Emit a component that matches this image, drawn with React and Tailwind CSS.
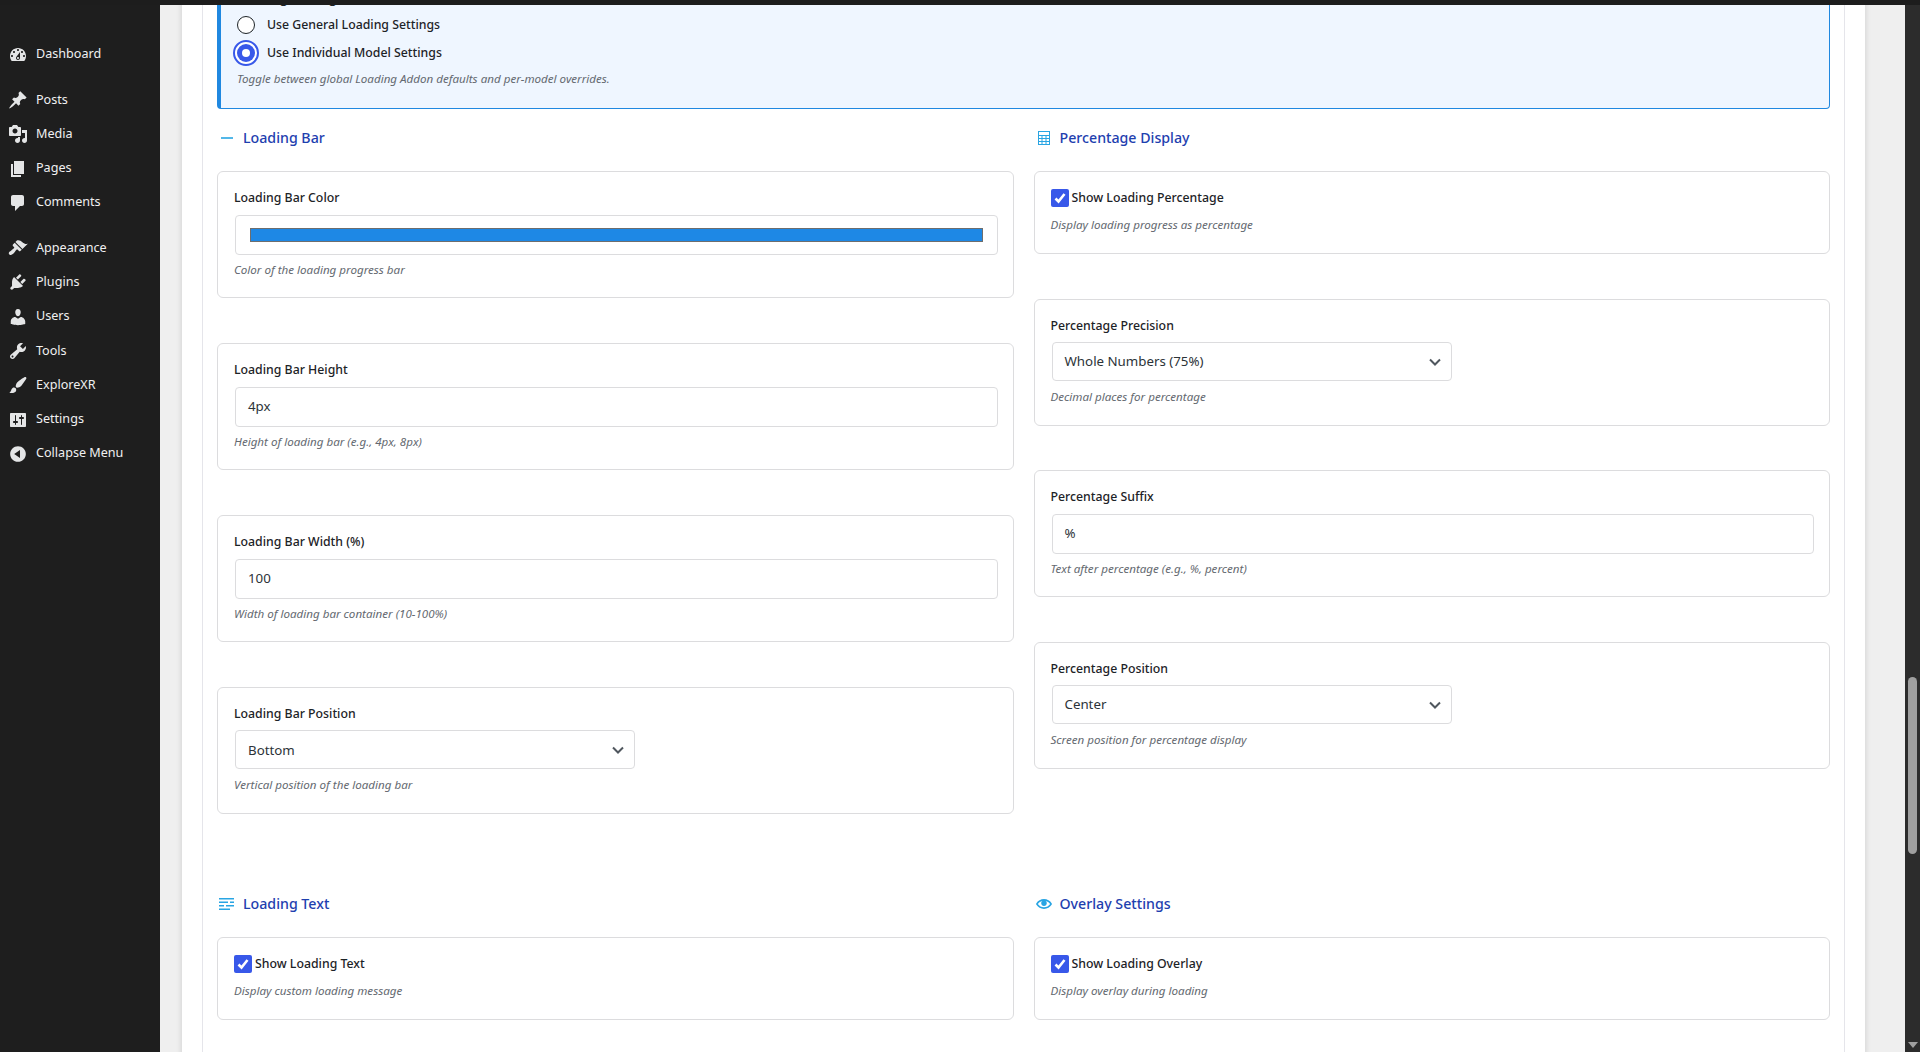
import React from 'react';

const FONT = "font-['Noto_Sans',sans-serif]";

const menu = [
    { label: 'Dashboard', d: 'M3.76 16h12.48c1.1-1.37 1.76-3.11 1.76-5 0-4.42-3.58-8-8-8s-8 3.58-8 8c0 1.89.66 3.63 1.76 5zM10 4c.55 0 1 .45 1 1s-.45 1-1 1-1-.45-1-1 .45-1 1-1zM6 6c.55 0 1 .45 1 1s-.45 1-1 1-1-.45-1-1 .45-1 1-1zm8 0c.55 0 1 .45 1 1s-.45 1-1 1-1-.45-1-1 .45-1 1-1zm-5.37 5.55L12 7v6c0 1.1-.9 2-2 2s-2-.9-2-2c0-.57.24-1.08.63-1.45zM4 10c.55 0 1 .45 1 1s-.45 1-1 1-1-.45-1-1 .45-1 1-1zm12 0c.55 0 1 .45 1 1s-.45 1-1 1-1-.45-1-1 .45-1 1-1zm-5 3c0-.55-.45-1-1-1s-1 .45-1 1 .45 1 1 1 1-.45 1-1z', gap: true },
    { label: 'Posts', d: 'M10.44 3.02l1.82-1.82 6.36 6.35-1.83 1.82c-1.05-.68-2.48-.57-3.41.36l-.75.75c-.92.93-1.04 2.35-.35 3.41l-1.83 1.82-2.41-2.41-2.8 2.79c-.42.42-3.38 2.71-3.8 2.29s1.86-3.39 2.28-3.81l2.79-2.79L4.1 9.36l1.83-1.82c1.05.69 2.48.57 3.4-.36l.75-.75c.93-.92 1.05-2.35.36-3.41z' },
    { label: 'Media', d: 'M13 11V4c0-.55-.45-1-1-1h-1.67L9 1H5L3.67 3H2c-.55 0-1 .45-1 1v7c0 .55.45 1 1 1h10c.55 0 1-.45 1-1zM7 4.5c1.38 0 2.5 1.12 2.5 2.5S8.38 9.5 7 9.5 4.5 8.38 4.5 7 5.62 4.5 7 4.5zM14 6h5v10.5c0 1.38-1.12 2.5-2.5 2.5S14 17.88 14 16.5s1.12-2.5 2.5-2.5c.17 0 .34.02.5.05V9h-3V6zm-4 8.05V13h2v3.5c0 1.38-1.12 2.5-2.5 2.5S7 17.88 7 16.5 8.12 14 9.5 14c.17 0 .34.02.5.05z' },
    { label: 'Pages', d: 'M6 15V2h10v13H6zm-1 1h8v2H3V5h2v11z' },
    { label: 'Comments', d: 'M5 2h9c1.1 0 2 .9 2 2v7c0 1.1-.9 2-2 2h-2l-5 5v-5H5c-1.1 0-2-.9-2-2V4c0-1.1.9-2 2-2z', gap: true },
    { label: 'Appearance', d: 'M14.48 11.06L7.41 3.99l1.5-1.5c.5-.56 2.3-.47 3.51.32 1.21.8 1.43 1.28 2.91 2.1 1.18.64 2.45 1.26 4.45.85zm-.71.71L6.7 4.7 4.93 6.47c-.39.39-.39 1.02 0 1.41l1.06 1.06c.39.39.39 1.03 0 1.42-.6.6-1.43 1.11-2.21 1.69-.35.26-.7.53-1.01.84C1.43 13.23 0 15 1.41 16.41s3.18-.02 4.52-1.36c.31-.31.58-.66.84-1.01.58-.78 1.09-1.61 1.69-2.21.39-.39 1.02-.39 1.41 0l1.06 1.06c.39.39 1.02.39 1.41 0z' },
    { label: 'Plugins', d: 'M13.11 4.36L9.87 7.6 8 5.73l3.24-3.24c.35-.34 1.05-.2 1.56.32.52.51.66 1.21.31 1.55zm-8 1.77l.91-1.12 9.01 9.01-1.19.84c-.71.71-2.63 1.16-3.82 1.16H6.14L4.9 17.26c-.59.59-1.54.59-2.12 0-.59-.58-.59-1.53 0-2.12l1.24-1.24v-3.88c0-1.13.4-3.19 1.09-3.89zm7.26 3.97l3.24-3.24c.34-.35 1.04-.21 1.55.31.52.51.66 1.21.31 1.55l-3.24 3.25z' },
    { label: 'Users', d: 'M10 9.25c-2.27 0-2.73-3.44-2.73-3.44C7 4.02 7.82 2 9.97 2c2.16 0 2.98 2.02 2.71 3.81 0 0-.41 3.44-2.68 3.44zm0 2.57L12.72 10c2.39 0 4.52 2.33 4.52 4.53v2.49s-3.65 1.13-7.24 1.13c-3.65 0-7.24-1.13-7.24-1.13v-2.49c0-2.25 1.94-4.48 4.47-4.48z' },
    { label: 'Tools', d: 'M16.68 9.77c-1.34 1.34-3.3 1.67-4.95.99l-5.41 6.52c-.99.99-2.59.99-3.58 0s-.99-2.59 0-3.57l6.52-5.42c-.68-1.65-.35-3.61.99-4.95 1.28-1.28 3.12-1.62 4.72-1.06l-2.89 2.89 2.82 2.82 2.86-2.87c.53 1.58.18 3.39-1.08 4.65zM3.81 16.21c.4.39 1.04.39 1.43 0 .4-.4.4-1.04 0-1.43-.39-.4-1.03-.4-1.43 0-.39.39-.39 1.03 0 1.43z' },
    { label: 'ExploreXR', d: 'M18.33 3.57s.27-.8-.31-1.36c-.53-.52-1.22-.24-1.22-.24-.61.3-5.76 3.47-7.67 5.57-.86.96-2.06 3.79-1.09 4.82.92.98 3.96-.17 4.79-1 2.06-2.06 5.21-7.17 5.5-7.79zM1.4 17.65c2.37-1.56 1.46-3.41 3.23-4.64.93-.65 2.22-.62 3.08.29.63.67.8 2.57-.16 3.46-1.57 1.45-4 1.55-6.15.89z' },
    { label: 'Settings', d: 'M18 16V4c0-.55-.45-1-1-1H3c-.55 0-1 .45-1 1v12c0 .55.45 1 1 1h14c.55 0 1-.45 1-1zM8 11h1c.55 0 1 .45 1 1s-.45 1-1 1H8v1.5c0 .28-.22.5-.5.5s-.5-.22-.5-.5V13H6c-.55 0-1-.45-1-1s.45-1 1-1h1V5.5c0-.28.22-.5.5-.5s.5.22.5.5V11zm5-2h-1c-.55 0-1-.45-1-1s.45-1 1-1h1V5.5c0-.28.22-.5.5-.5s.5.22.5.5V7h1c.55 0 1 .45 1 1s-.45 1-1 1h-1v5.5c0 .28-.22.5-.5.5s-.5-.22-.5-.5V9z' },
    { label: 'Collapse Menu', d: 'M10 2.16c4.33 0 7.84 3.51 7.84 7.84s-3.51 7.84-7.84 7.84S2.16 14.33 2.16 10 5.71 2.16 10 2.16zm2 11.72V6.12L6.18 9.97z' },
];

const Sidebar = () => (
    <aside className="w-[160px] shrink-0 bg-[#1e1e1e] pt-[37.5px]">
        {menu.map((item) => (
            <div key={item.label} className={`flex h-[34.3px] items-center text-[12.6px] text-[#f0f0f1] ${item.gap ? 'mb-[11px]' : ''}`}>
                <svg viewBox="0 0 20 20" className="ml-[8px] h-[20px] w-[20px] fill-[#e4e5e6]"><path d={item.d} /></svg>
                <span className="ml-[8px]">{item.label}</span>
            </div>
        ))}
    </aside>
);

const SectionIcon = ({ type }) => {
    if (type === 'minus') return <svg viewBox="0 0 20 20" className="h-[20px] w-[20px] fill-[#29a5e3]"><path d="M4 9.200h12v1.600H4z" /></svg>;
    if (type === 'calc') return (
        <svg viewBox="0 0 20 20" className="h-[20px] w-[20px] fill-[#29a5e3]">
            <path fillRule="evenodd" d="M4 3h12v14H4zM5 4v3h10V4zm0 4v2h2.500V8zm3.500 0v2h3V8zm4 0v2H15V8zM5 11v2h2.500v-2zm3.500 0v2h3v-2zm4 0v2H15v-2zM5 14v2h2.500v-2zm3.500 0v2h3v-2zm4 0v2H15v-2z" />
        </svg>
    );
    if (type === 'text') return (
        <svg viewBox="0 0 20 20" className="h-[20px] w-[20px] fill-[#29a5e3]">
            <path d="M2 4h15v1.500H2zM2 7.500h9V9H2zM13 7.500h4V9h-4zM2 11h5v1.500H2zM9 11h8v1.500H9zM2 14.500h11V16H2z" />
        </svg>
    );
    return (
        <svg viewBox="0 0 20 20" className="mx-[2px] h-[16px] w-[16px] fill-[#29a5e3]">
            <path d="M19.700 9.400C17.700 6 14 3.900 10 3.900S2.300 6 .3 9.400L0 10l.3.6c2 3.400 5.700 5.500 9.700 5.500s7.700-2.100 9.700-5.500l.3-.6-.3-.6zM10 14.100c-3.100 0-6-1.600-7.700-4.100C3.600 8 5.700 6.600 8 6.100c-.9.6-1.500 1.700-1.500 2.900 0 1.900 1.600 3.500 3.500 3.500s3.500-1.600 3.500-3.500c0-1.200-.6-2.300-1.500-2.900 2.300.5 4.400 1.900 5.700 3.900-1.700 2.500-4.600 4.100-7.700 4.100z" />
        </svg>
    );
};

const SectionTitle = ({ icon, children }) => (
    <h3 className="mb-[21px] flex h-[24px] items-center gap-[6px] text-[14.2px] font-medium text-[#1e40af]">
        <SectionIcon type={icon} />
        {children}
    </h3>
);

const Hint = ({ children, className = 'mt-[7px]' }) => (
    <p className={`${className} text-[11.6px] leading-[18px] italic text-[#646970]`}>{children}</p>
);

const Field = ({ label, hint, children }) => (
    <div className="h-[127px] rounded-[6px] border border-[#dcdcde] bg-white px-[16px] pt-[16px]">
        <label className="mb-[6px] block text-[12.3px] leading-[20px] font-medium text-[#1d2327]">{label}</label>
        {children}
        <Hint>{hint}</Hint>
    </div>
);

const TextBox = ({ value }) => (
    <div className="-mr-[1px] -mb-[1px] mt-[7px] ml-[1px] flex h-[40px] items-center rounded-[4px] border border-[#dcdcde] bg-white px-[12px] text-[13.3px] text-[#2c3338]">{value}</div>
);

const SelectBox = ({ value }) => (
    <div className="ml-[1px] flex h-[39px] w-[400px] items-center justify-between rounded-[4px] border border-[#dcdcde] bg-white pt-[1px] pr-[6px] pl-[12px] text-[13.3px] text-[#2c3338]">
        <span className="pt-[1px]">{value}</span>
        <svg viewBox="0 0 20 20" className="h-[20px] w-[20px] fill-none stroke-[#50575e] stroke-[2]"><path d="M5 7.500l5 5 5-5" /></svg>
    </div>
);

const CheckField = ({ label, hint }) => (
    <div className="h-[83px] rounded-[6px] border border-[#dcdcde] bg-white px-[16px] pt-[16px]">
        <div className="flex h-[20px] items-center gap-[3px] text-[12.3px] font-medium text-[#1d2327]">
            <span className="flex h-[18px] w-[18px] items-center justify-center rounded-[2px] bg-[#3858e9]">
                <svg viewBox="0 0 18 18" className="h-[18px] w-[18px] fill-none stroke-white stroke-[2.600]"><path d="M4.500 9.500l3 3 6-7.500" /></svg>
            </span>
            {label}
        </div>
        <Hint className="mt-[8px]">{hint}</Hint>
    </div>
);

const Radio = ({ checked, label }) => (
    <div className="flex h-[28px] items-center gap-[8px]">
        {checked ? (
            <span className="flex h-[26px] w-[26px] items-center justify-center rounded-full border-2 border-[#3858e9] bg-white">
                <span className="flex h-[18px] w-[18px] items-center justify-center rounded-full bg-[#3858e9]">
                    <span className="h-[8px] w-[8px] rounded-full bg-white" />
                </span>
            </span>
        ) : (
            <span className="mx-[4px] h-[18px] w-[18px] rounded-full border border-[#1d2327] bg-white" />
        )}
        <span className="text-[12.3px] font-medium text-[#1d2327]">{label}</span>
    </div>
);

const App = () => (
    <div className={`flex h-screen overflow-hidden bg-[#efefef] ${FONT}`}>
        <div className="fixed inset-x-0 top-0 z-10 h-[5px] bg-[#1d1d1d]" />
        <Sidebar />
        <main className="min-w-0 flex-1 overflow-hidden pr-[40px] pl-[22px]">
            <div className="-mt-[20px] h-[1200px] bg-white px-[20px] shadow-[0_0_6px_rgba(0,0,0,0.15)]">
                <div className="h-full border-x border-[#e5e5ea] px-[14px]">
                    <div className="mb-[17px] rounded-[4px] border border-l-[4px] border-[#2088e0] bg-[#eff6ff] pt-[12px] pr-[12px] pb-[20px] pl-[12px]">
                        <p className="mb-[8px] h-[10px] pl-[4px] text-[13px] leading-[10px] font-semibold text-[#1d2327]">Loading Settings</p>
                        <Radio label="Use General Loading Settings" />
                        <Radio checked label="Use Individual Model Settings" />
                        <Hint className="mt-[3px] pl-[4px]">Toggle between global Loading Addon defaults and per-model overrides.</Hint>
                    </div>
                    <div className="grid grid-cols-2 gap-x-[20px]">
                        <div>
                            <SectionTitle icon="minus">Loading Bar</SectionTitle>
                            <div className="flex flex-col gap-[45px]">
                                <Field label="Loading Bar Color" hint="Color of the loading progress bar">
                                    <div className="-mr-[1px] -mb-[1px] mt-[7px] ml-[1px] flex h-[40px] items-center rounded-[4px] border border-[#dcdcde] bg-white pr-[14px] pl-[14px]">
                                        <div className="h-[14px] w-full border border-[#6e6e6e] bg-[#1e88e5]" />
                                    </div>
                                </Field>
                                <Field label="Loading Bar Height" hint="Height of loading bar (e.g., 4px, 8px)"><TextBox value="4px" /></Field>
                                <Field label="Loading Bar Width (%)" hint="Width of loading bar container (10-100%)"><TextBox value="100" /></Field>
                                <Field label="Loading Bar Position" hint="Vertical position of the loading bar"><SelectBox value="Bottom" /></Field>
                            </div>
                        </div>
                        <div>
                            <SectionTitle icon="calc">Percentage Display</SectionTitle>
                            <div className="flex flex-col gap-[44.5px]">
                                <CheckField label="Show Loading Percentage" hint="Display loading progress as percentage" />
                                <Field label="Percentage Precision" hint="Decimal places for percentage"><SelectBox value="Whole Numbers (75%)" /></Field>
                                <Field label="Percentage Suffix" hint="Text after percentage (e.g., %, percent)"><TextBox value="%" /></Field>
                                <Field label="Percentage Position" hint="Screen position for percentage display"><SelectBox value="Center" /></Field>
                            </div>
                        </div>
                    </div>
                    <div className="mt-[78px] grid grid-cols-2 gap-x-[20px]">
                        <div>
                            <SectionTitle icon="text">Loading Text</SectionTitle>
                            <CheckField label="Show Loading Text" hint="Display custom loading message" />
                        </div>
                        <div>
                            <SectionTitle icon="eye">Overlay Settings</SectionTitle>
                            <CheckField label="Show Loading Overlay" hint="Display overlay during loading" />
                        </div>
                    </div>
                </div>
            </div>
        </main>
        <div className="relative w-[15px] shrink-0 bg-[#2c2c2c]">
            <div className="absolute top-[677px] left-[3px] h-[177px] w-[9px] rounded-full bg-[#9f9f9f]" />
            <div className="absolute bottom-[4px] left-[3px] h-0 w-0 border-x-[5px] border-t-[6px] border-x-transparent border-t-[#9f9f9f]" />
        </div>
    </div>
);

export default App;
